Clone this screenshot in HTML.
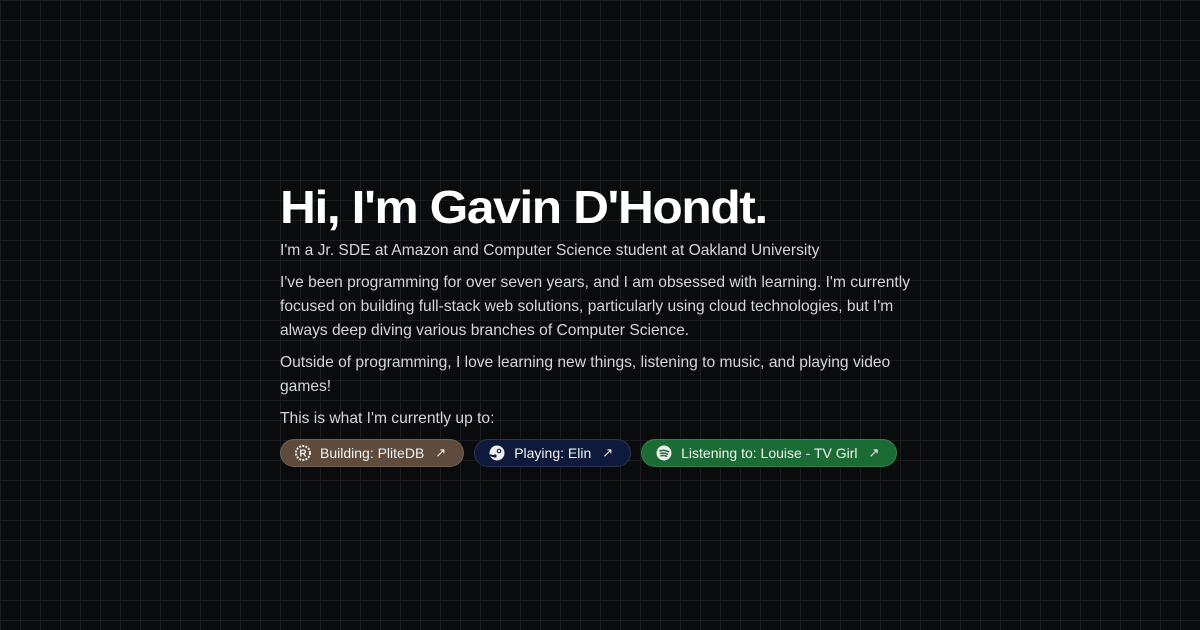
<!DOCTYPE html>
<html><head><style>
html,body{margin:0;width:1200px;height:630px;overflow:hidden}
body{background-color:#0a0b0d;background-image:linear-gradient(#1b1c1f 1px,transparent 1px),linear-gradient(90deg,#1b1c1f 1px,transparent 1px);background-size:20px 20px;background-position:0 0;font-family:"Liberation Sans",sans-serif;color:#d6d6d6}
.c{position:absolute;left:280px;top:178px;width:645px}
h1{margin:0;font-size:46px;font-weight:bold;color:#fff;letter-spacing:-1.3px;line-height:58px;transform:scaleX(1.08);transform-origin:left;white-space:nowrap}
p{margin:0 0 8px;font-size:15.6px;line-height:24px}
.b{display:flex;gap:10px;margin-top:4px}
.g{height:26px;border-radius:14px;display:flex;align-items:center;padding:0 17px 0 14px;font-size:14px;color:#f2f2f2;border:1px solid rgba(255,255,255,.12)}
.g svg{margin-right:9px}
.a{margin-left:11px;font-size:13px}
</style></head><body>
<div class="c">
<h1>Hi, I'm Gavin D'Hondt.</h1>
<p style="margin-top:3px">I'm a Jr. SDE at Amazon and Computer Science student at Oakland University</p>
<p>I've been programming for over seven years, and I am obsessed with learning. I'm currently focused on building full-stack web solutions, particularly using cloud technologies, but I'm always deep diving various branches of Computer Science.</p>
<p>Outside of programming, I love learning new things, listening to music, and playing video games!</p>
<p>This is what I'm currently up to:</p>
<div class="b">
<div class="g" style="background:#5e4b3c"><svg width="16" height="16" viewBox="0 0 16 16"><circle cx="8" cy="8" r="7" fill="none" stroke="#eee" stroke-width="2" stroke-dasharray="2 1.2"/><text x="8" y="11.5" font-size="10" font-weight="bold" text-anchor="middle" fill="#eee" font-family="Liberation Sans">R</text></svg>Building: PliteDB<span class="a">↗</span></div>
<div class="g" style="background:#0d1a3b"><svg width="16" height="16" viewBox="0 0 16 16"><circle cx="8" cy="8" r="7.5" fill="#eee"/><circle cx="10" cy="6" r="2.3" fill="#0d1a3b"/><circle cx="10" cy="6" r="1.2" fill="#eee"/><path d="M1 10l4 1.5" stroke="#0d1a3b" stroke-width="2"/><circle cx="6" cy="11" r="1.6" fill="#0d1a3b"/></svg>Playing: Elin<span class="a">↗</span></div>
<div class="g" style="background:#1a6b34"><svg width="16" height="16" viewBox="0 0 16 16"><circle cx="8" cy="8" r="7.5" fill="#eee"/><path d="M4 6q4.5-1.5 8.5.8M4.5 8.5q3.8-1.1 7 .7M5 10.8q3-.8 5.6.5" stroke="#1a6b34" stroke-width="1.5" fill="none" stroke-linecap="round"/></svg>Listening to: Louise - TV Girl<span class="a">↗</span></div>
</div>
</div>
</body></html>
